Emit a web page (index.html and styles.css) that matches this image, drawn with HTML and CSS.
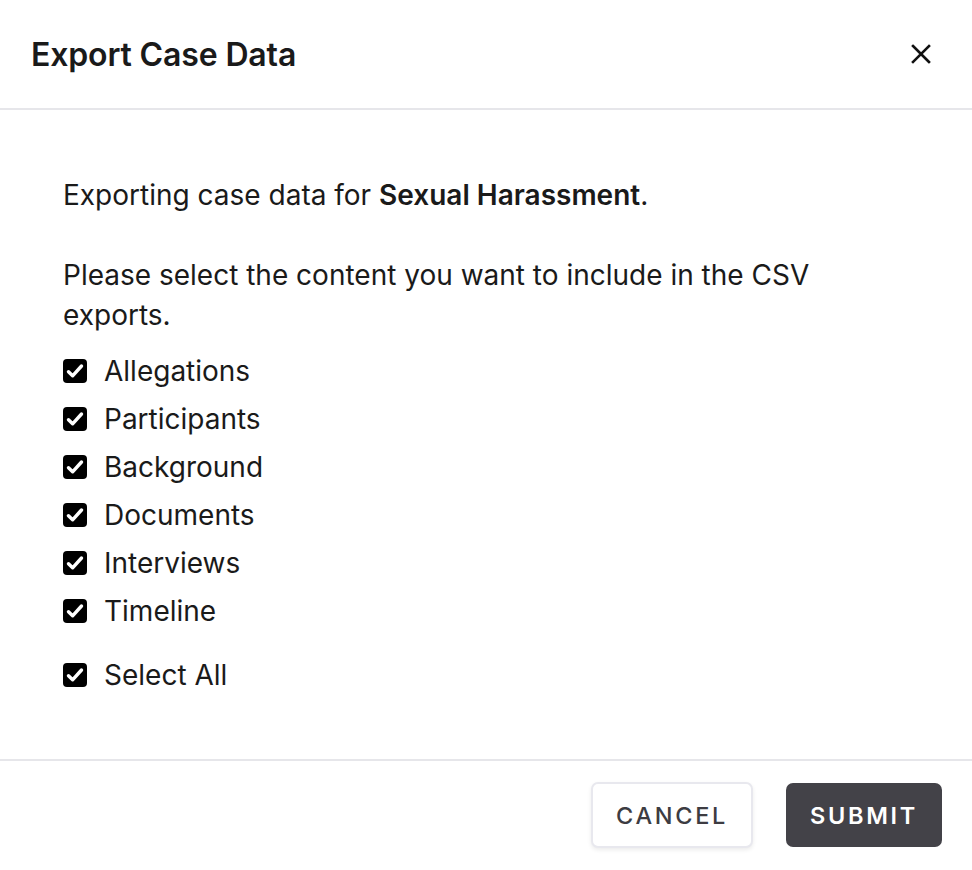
FILE: index.html
```html
<!DOCTYPE html>
<html>
<head>
<meta charset="utf-8">
<link rel="stylesheet" href="styles.css">
</head>
<body>
<div class="dialog">
  <div class="header">
    <h1 class="title">Export Case Data</h1>
    <button class="close" aria-label="Close">
      <svg width="22" height="22" viewBox="0 0 22 22"><path d="M3 3L19 19M19 3L3 19" stroke="#111" stroke-width="2.6" stroke-linecap="square"/></svg>
    </button>
  </div>
  <div class="content">
    <p class="intro">Exporting case data for <strong>Sexual Harassment</strong>.</p>
    <p class="instr">Please select the content you want to include in the CSV exports.</p>
    <ul class="list">
      <li class="item"><span class="box"><svg width="24" height="24" viewBox="0 0 24 24"><path d="M5.5 12.8L9.6 16.8L18.5 7" fill="none" stroke="#fff" stroke-width="3.4" stroke-linecap="round" stroke-linejoin="round"/></svg></span>Allegations</li>
      <li class="item"><span class="box"><svg width="24" height="24" viewBox="0 0 24 24"><path d="M5.5 12.8L9.6 16.8L18.5 7" fill="none" stroke="#fff" stroke-width="3.4" stroke-linecap="round" stroke-linejoin="round"/></svg></span>Participants</li>
      <li class="item"><span class="box"><svg width="24" height="24" viewBox="0 0 24 24"><path d="M5.5 12.8L9.6 16.8L18.5 7" fill="none" stroke="#fff" stroke-width="3.4" stroke-linecap="round" stroke-linejoin="round"/></svg></span>Background</li>
      <li class="item"><span class="box"><svg width="24" height="24" viewBox="0 0 24 24"><path d="M5.5 12.8L9.6 16.8L18.5 7" fill="none" stroke="#fff" stroke-width="3.4" stroke-linecap="round" stroke-linejoin="round"/></svg></span>Documents</li>
      <li class="item"><span class="box"><svg width="24" height="24" viewBox="0 0 24 24"><path d="M5.5 12.8L9.6 16.8L18.5 7" fill="none" stroke="#fff" stroke-width="3.4" stroke-linecap="round" stroke-linejoin="round"/></svg></span>Interviews</li>
      <li class="item"><span class="box"><svg width="24" height="24" viewBox="0 0 24 24"><path d="M5.5 12.8L9.6 16.8L18.5 7" fill="none" stroke="#fff" stroke-width="3.4" stroke-linecap="round" stroke-linejoin="round"/></svg></span>Timeline</li>
    </ul>
    <div class="item select-all"><span class="box"><svg width="24" height="24" viewBox="0 0 24 24"><path d="M5.5 12.8L9.6 16.8L18.5 7" fill="none" stroke="#fff" stroke-width="3.4" stroke-linecap="round" stroke-linejoin="round"/></svg></span>Select All</div>
  </div>
  <div class="footer">
    <button class="btn btn-cancel">CANCEL</button>
    <button class="btn btn-submit">SUBMIT</button>
  </div>
</div>
</body>
</html>
```
FILE: styles.css
```css
html, body {
  margin: 0;
  padding: 0;
  background: #fff;
}
body {
  font-family: Inter, "Noto Sans", sans-serif;
  color: #1a1a1a;
}
.dialog {
  width: 972px;
}
.header {
  height: 108px;
  padding: 0 40px 0 31px;
  display: flex;
  align-items: center;
  justify-content: space-between;
  border-bottom: 2px solid #e6e6ea;
}
.title {
  margin: 0;
  font-size: 32px;
  font-weight: 600;
  color: #1a1a1a;
  letter-spacing: -0.15px;
}
.close {
  border: 0;
  background: none;
  padding: 0;
  width: 22px;
  height: 22px;
  display: flex;
}
.content {
  padding: 65px 63px 60px 63px;
  font-size: 28px;
  line-height: 40px;
}
.content p {
  margin: 0;
}
.intro {
  margin-bottom: 40px !important;
}
.intro strong {
  font-weight: 600;
}
.instr {
  width: 780px;
  margin-bottom: 12px !important;
}
.list {
  list-style: none;
  margin: 0 0 16px 0;
  padding: 0;
}
.item {
  height: 48px;
  display: flex;
  align-items: center;
}
.box {
  width: 24px;
  height: 24px;
  border-radius: 4px;
  background: #000;
  display: flex;
  align-items: center;
  justify-content: center;
  margin-right: 17px;
  flex: none;
}
.footer {
  border-top: 2px solid #e6e6ea;
  display: flex;
  justify-content: flex-end;
  align-items: center;
  gap: 33px;
  padding: 21px 30px 21px 0;
}
.btn {
  font-family: Inter, "Noto Sans", sans-serif;
  font-size: 23.5px;
  font-weight: 500;
  letter-spacing: 2.7px;
  height: 64px;
  border-radius: 7px;
  cursor: pointer;
}
.btn-cancel {
  width: 162px;
  height: 66px;
  background: #fff;
  color: #3d3c42;
  border: 2px solid #e8e8ee;
  box-shadow: 0 2px 4px rgba(0,0,0,0.08);
}
.btn-submit {
  width: 156px;
  background: #434248;
  color: #fff;
  border: 0;
  font-weight: 600;
}
```
